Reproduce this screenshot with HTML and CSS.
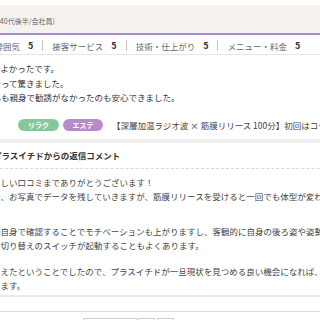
FILE: index.html
```html
<!DOCTYPE html>
<html lang="ja">
<head>
    <meta charset="UTF-8">
    <meta name="viewport" content="width=device-width, initial-scale=1.0">
    <title>口コミ</title>
    <link rel="stylesheet" href="styles.css">
</head>
<body>
    <div class="page">
        <div class="review">
            <div class="review-head">
                <span class="reviewer">(40代後半/会社員)</span>
            </div>
            <div class="ratings">
                <span class="label">雰囲気</span><span class="score">5</span><span class="sep"></span>
                <span class="label">接客サービス</span><span class="score">5</span><span class="sep"></span>
                <span class="label">技術・仕上がり</span><span class="score">5</span><span class="sep"></span>
                <span class="label">メニュー・料金</span><span class="score">5</span>
            </div>
            <p class="comment">
                とてもよかったです。<br>
                軽くなって驚きました。<br>
                皆さんも親身で勧誘がなかったのも安心できました。
            </p>
            <div class="menu">
                <span class="tag tag-relax">リラク</span>
                <span class="tag tag-este">エステ</span>
                <span class="menu-name">【深層加温ラジオ波 × 筋膜リリース 100分】初回はコチラ</span>
            </div>
            <div class="reply">
                <h3 class="reply-title">プラスイチドからの返信コメント</h3>
                <div class="reply-text">
                    <p>素晴らしい口コミまでありがとうございます！<br>施術後、お写真でデータを残していきますが、筋膜リリースを受けると一回でも体型が変わります。</p>
                    <p>お客様自身で確認することでモチベーションも上がりますし、客観的に自身の後ろ姿や姿勢を見ることで<br>意識の切り替えのスイッチが起動することもよくあります。</p>
                    <p>いと考えたということでしたので、プラスイチドが一旦現状を見つめる良い機会になれば、<br>と思います。</p>
                </div>
            </div>
        </div>
        <div class="spacer"></div>
        <div class="pager">
            <a class="pager-btn pager-wide" href="#">前へ</a>
            <a class="pager-btn" href="#">1</a>
            <a class="pager-btn" href="#">2</a>
        </div>
    </div>
</body>
</html>
```

FILE: styles.css
```css
html, body {
    margin: 0;
    padding: 0;
    overflow: hidden;
    background: #fff;
}
body {
    font-family: "Noto Sans CJK JP", "Noto Sans", sans-serif;
    color: #333;
    width: 320px;
    height: 320px;
}
.page {
    margin-left: -30px;
    width: 480px;
}
.review-head {
    margin-top: 5px;
    height: 24px;
    padding: 4px 0 0 27.5px;
    background: #f6f3ee;
    border-bottom: 2px solid #a68dd8;
    display: flex;
    align-items: center;
}
.reviewer {
    font-size: 7px;
    color: #666;
}
.ratings {
    height: 17px;
    padding: 2px 0 0 24.5px;
    border-bottom: 1px solid #e6e6e6;
    display: flex;
    align-items: center;
    white-space: nowrap;
}
.label {
    font-size: 8.5px;
    color: #666;
}
.score {
    font-size: 9px;
    font-weight: bold;
    color: #333;
    margin-left: 8px;
}
.sep {
    display: inline-block;
    width: 1px;
    height: 11px;
    background: #c4c4c4;
    margin: 0 9px;
}
.comment {
    margin: 6px 0 0;
    padding-left: 5.5px;
    font-size: 8.5px;
    line-height: 14.5px;
    color: #333;
    white-space: nowrap;
}
.menu {
    margin-top: 14.5px;
    padding-left: 48px;
    height: 12px;
    display: flex;
    align-items: center;
    white-space: nowrap;
}
.tag {
    display: inline-block;
    width: 41px;
    height: 12px;
    line-height: 12px;
    border-radius: 6px;
    color: #fff;
    font-size: 7px;
    font-weight: bold;
    text-align: center;
}
.tag-relax {
    background: #84c99c;
}
.tag-este {
    background: #b68bc8;
    width: 40px;
    margin-left: 4px;
}
.menu-name {
    margin-left: 9px;
    font-size: 8.5px;
    color: #444;
}
.reply {
    margin-top: 8px;
    border-top: 4px solid #efefef;
}
.reply-title {
    margin: 6px 0 0;
    padding: 0 0 7px 23px;
    font-size: 8.5px;
    line-height: 12px;
    font-weight: bold;
    color: #333;
    border-bottom: 1px dashed #d8d8d8;
}
.reply-text {
    padding: 7px 0 3px 5px;
    font-size: 8.5px;
    line-height: 13.5px;
    color: #444;
    white-space: nowrap;
    border-bottom: 2px solid #ebebeb;
}
.reply-text p {
    margin: 0;
}
.reply-text p + p {
    margin-top: 22px;
}
.reply-text p:last-child {
    margin-top: 13px;
}
.spacer {
    height: 14px;
    border-bottom: 1px solid #dcdcdc;
}
.pager {
    margin-top: 6px;
    padding-left: 113px;
    display: flex;
    gap: 1px;
}
.pager-btn {
    display: block;
    width: 15px;
    height: 18px;
    border: 1px solid #cfcfcf;
    font-size: 8px;
    line-height: 18px;
    text-align: center;
    color: #666;
    text-decoration: none;
}
.pager-wide {
    width: 52px;
}
.pager-btn + .pager-btn + .pager-btn {
    margin-left: 1px;
}
```
